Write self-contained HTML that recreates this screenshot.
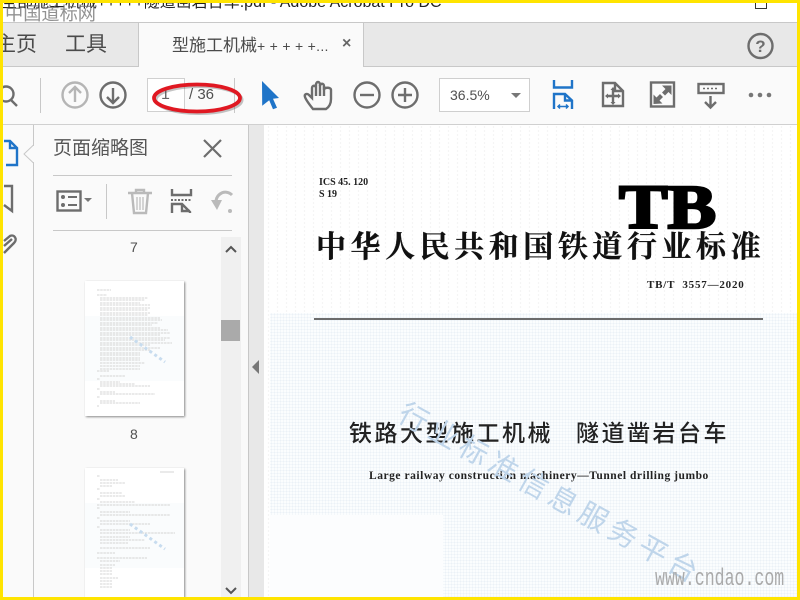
<!DOCTYPE html>
<html lang="zh"><head><meta charset="utf-8"><style>
*{box-sizing:border-box}
html,body{margin:0;padding:0;background:#fff}
body{width:800px;height:600px;position:relative;overflow:hidden;font-family:"Liberation Sans","Noto Sans CJK SC",sans-serif;color:#505050}
.a{position:absolute;white-space:nowrap}
svg{position:absolute;overflow:visible}
.s{fill:none;stroke:#6d6d6d;stroke-width:2.4}
</style></head><body>
<div class="a" style="left:3px;top:3px;width:794px;height:20px;background:#fff;border-bottom:1px solid #c8c8c8;overflow:hidden"><div class="a" style="left:-2px;top:-10px;font-size:16px;color:#222;line-height:20px">全部施工机械+++++隧道凿岩台车.pdf - Adobe Acrobat Pro DC</div><div class="a" style="left:752px;top:-6px;width:12px;height:12px;border:1px solid #333"></div></div>
<div class="a" style="left:3px;top:23px;width:794px;height:44px;background:#e8e8e8;border-bottom:1px solid #c8c8c8"></div>
<div class="a" style="left:138px;top:23px;width:226px;height:44px;background:#fafafa;border-left:1px solid #c8c8c8;border-right:1px solid #c8c8c8"></div>
<div class="a" style="left:3px;top:23px;width:135px;height:43px;overflow:hidden"><div class="a" style="left:-8px;top:8px;font-size:21px;line-height:28px;color:#4a4a4a">主页</div></div>
<div class="a" style="left:65px;top:31px;font-size:21px;line-height:28px;color:#4a4a4a">工具</div>
<div class="a" style="left:172px;top:34px;font-size:17px;line-height:23px;color:#4a4a4a">型施工机械<span style="font-size:14px;letter-spacing:.3px">+ + + + +...</span></div>
<div class="a" style="left:342px;top:33px;font-size:16px;line-height:22px;font-weight:bold;color:#666">×</div>
<svg style="left:0;top:0" width="800" height="125">
<circle class="s" cx="760.500" cy="46" r="12" stroke-width="2.500"/>
<text x="760.500" y="52" text-anchor="middle" font-size="17" font-weight="bold" fill="#6d6d6d" font-family="Liberation Sans">?</text>
</svg>
<div class="a" style="left:3px;top:67px;width:794px;height:58px;background:#fafafa;border-bottom:1px solid #d0d0d0"></div>
<svg style="left:0;top:0" width="800" height="125">
<circle class="s" cx="6" cy="94" r="7.500" stroke-width="2.600"/><path class="s" stroke-width="3" d="M11 100l6 6"/>
<path d="M40.500 78v35M234.500 78v35" stroke="#c8c8c8" stroke-width="1"/>
<circle class="s" style="stroke:#b5b5b5" cx="75" cy="95" r="12.500"/><path class="s" style="stroke:#b5b5b5" d="M75 102V88M69 93l6-6 6 6"/>
<circle class="s" cx="113" cy="95" r="12.500"/><path class="s" d="M113 88v14M107 97l6 6 6-6"/>
<rect x="147.500" y="78.500" width="37" height="33" fill="#fff" stroke="#d0d0d0"/>
<path fill="#1f74c8" d="M262 81l17 17-6 .8 4 9-4 1.500-3.800-9-7 5.500z"/>
<path class="s" stroke-width="2.200" d="M313 109C309 104 306 100 305 97C304 94 307 93 309 95L312 98V88C312 85 316 85 316 88V85C316 81 320 81 320 85V86C320 83 324 83 324 86V90C324 87 331 87 331 90V99C331 104 329 107 326 109Z"/>
<path class="s" stroke-width="1.800" d="M316 88v8M320 85v11M324 86v10"/>
<circle class="s" cx="367" cy="95" r="12.500"/><path class="s" d="M360 95h14"/>
<circle class="s" cx="405" cy="95" r="12.500"/><path class="s" d="M398 95h14M405 88v14"/>
<rect x="439.500" y="78.500" width="90" height="33" fill="#fff" stroke="#cfcfcf"/>
<path fill="#777" d="M511 93h10l-5 5z"/>
<path fill="none" stroke="#1f74c8" stroke-width="2.400" d="M554 80v7.500h18V80M554 109V94h11l7 6.500V109M565 94v6.500h7"/>
<path fill="none" stroke="#1f74c8" stroke-width="1.500" d="M558 106.500h10M560 104.500l-2 2 2 2M566 104.500l2 2-2 2"/>
<path class="s" stroke-width="2.800" d="M603 83h12l8 8v15H603zM615 83v8h8"/>
<path class="s" stroke-width="1.500" d="M613 90v12M607 96h12"/>
<path fill="#6d6d6d" d="M613 87l2.500 3h-5zM613 105l2.500-3h-5zM605 96l3-2.500v5zM621 96l-3-2.500v5z"/>
<rect class="s" x="651" y="82.500" width="23" height="24" stroke-width="2.800"/>
<path fill="#6d6d6d" d="M662 85.500h9.500v9.500l-3-3-3.500 3.500-3-3 3.500-3.500zM653.500 104v-9.500l3 3 3.500-3.500 3 3-3.500 3.500 3 3z"/>
<rect class="s" x="698.500" y="84" width="25" height="9" stroke-width="2.800"/>
<path stroke="#6d6d6d" stroke-width="1.500" stroke-dasharray="2 2" d="M703 88.500h15"/>
<path class="s" d="M710.500 96v11M705 102l5.500 5.500 5.500-5.500"/>
<circle cx="751" cy="95" r="2.300" fill="#777"/><circle cx="760" cy="95" r="2.300" fill="#777"/><circle cx="769" cy="95" r="2.300" fill="#777"/>
</svg>
<div class="a" style="left:161px;top:85px;font-size:16px;line-height:20px;color:#666">1</div>
<div class="a" style="left:189px;top:85px;font-size:15px;line-height:20px;color:#505050">/ 36</div>
<div class="a" style="left:450px;top:85px;font-size:14px;line-height:21px;color:#505050">36.5%</div>
<svg style="left:0;top:0" width="260" height="125">
<ellipse cx="199" cy="100" rx="43" ry="13.500" fill="none" stroke="#555" stroke-width="3" opacity=".35"/>
<ellipse cx="197" cy="98" rx="43" ry="13.500" fill="none" stroke="#e01822" stroke-width="3.800"/>
</svg>
<div class="a" style="left:3px;top:125px;width:31px;height:475px;background:#fafafa;border-right:1px solid #c8c8c8"></div>
<div class="a" style="left:34px;top:125px;width:215px;height:475px;background:#fafafa;border-right:1px solid #c8c8c8"></div>
<svg style="left:0;top:125px" width="260" height="475">
<path fill="#fafafa" stroke="#c8c8c8" d="M33.500 20l-9.500 9 9.500 9"/><path fill="#fafafa" d="M33 21h2v16h-2z"/>
<path fill="none" stroke="#1f74c8" stroke-width="2.400" d="M4 16h6l7 7v17H6M10 16v7h7"/>
<path fill="none" stroke="#6d6d6d" stroke-width="2.400" d="M4 61h8v25l-8-6"/>
<path fill="none" stroke="#6d6d6d" stroke-width="2.400" d="M4 128l10-10c4-4 0-9-4-7l-6 5M4 121l8-7"/>
<path d="M53 50.500h179M53 105.500h179" stroke="#c8c8c8" stroke-width="1"/>
<path d="M204 15l17 17M221 15l-17 17" stroke="#6d6d6d" stroke-width="2.200"/>
<rect x="57.500" y="66.500" width="23" height="19" fill="none" stroke="#6d6d6d" stroke-width="2.400"/>
<circle cx="63" cy="72" r="2" fill="#6d6d6d"/><circle cx="63" cy="80" r="2" fill="#6d6d6d"/><path d="M68 72h9M68 80h9" stroke="#6d6d6d" stroke-width="2"/>
<path fill="#777" d="M84 73h8l-4 4z"/>
<path d="M106.500 59v35" stroke="#c8c8c8"/>
<path fill="none" stroke="#bababa" stroke-width="2.400" d="M128 68h24M132 68l2 20h12l2-20M136 68v-3h8v3"/><path stroke="#bababa" stroke-width="1.200" d="M137 72v13M140 72v13M143 72v13"/>
<path fill="none" stroke="#6d6d6d" stroke-width="2.400" d="M172 64v6h19v-6M172 88V79h10l8 8v1M182 79v7h8"/>
<path stroke="#6d6d6d" stroke-width="2" stroke-dasharray="2 1.500" d="M171 75h21"/>
<path fill="none" stroke="#bababa" stroke-width="3" d="M232 70c-3-3-8-4-12-1-4 3-5 8-3 12"/><path fill="#bababa" d="M211 75h11l-5 10z"/><circle cx="230" cy="86" r="2" fill="#bababa"/>
<rect x="221" y="112" width="20" height="363" fill="#f0f0f0"/>
<rect x="221" y="195" width="19" height="21" fill="#aaa"/>
<path fill="none" stroke="#555" stroke-width="2" d="M226 127l5-5 5 5M226 463l5 5 5-5"/>
</svg>
<div class="a" style="left:53px;top:136px;font-size:19px;line-height:26px;color:#555">页面缩略图</div>
<div class="a" style="left:130px;top:238px;font-size:14px;line-height:18px;color:#505050">7</div>
<div class="a" style="left:130px;top:425px;font-size:14px;line-height:18px;color:#505050">8</div>
<svg style="left:85px;top:281px" width="100" height="316">
<rect width="99" height="135" fill="#fff" style="filter:drop-shadow(1px 1px 1px #888)"/><rect y="187" width="99" height="130" fill="#fff" style="filter:drop-shadow(1px 1px 1px #888)"/>
<rect y="35" width="99" height="65" fill="#fafcfd"/><rect y="222" width="99" height="65" fill="#fafcfd"/>
<path stroke="#d4d4d4" stroke-width="1" stroke-dasharray="2.500 .7" fill="none" d="M12 9h14M12 14h10M15 17h48M15 19h45M15 22h40M15 24h50M15 27h50M15 29h48M15 32h50M15 34h48M15 37h60M15 39h62M15 42h58M15 44h52M15 47h60M15 49h68M15 52h70M15 54h60M15 57h70M15 59h65M15 62h72M15 64h50M15 67h60M15 69h50M15 72h40M15 74h40M15 77h40M15 79h40M15 82h45M15 85h40M15 88h40M12 90h12M15 95h25M12 98h3M15 101h20M15 103h35M15 105h50M12 108h3M15 111h15M15 113h55M12 116h3M15 120h15M15 122h40M12 125h2M12 195h3M15 199h18M15 202h25M15 205h12M12 208h3M15 212h22M15 215h25M12 218h3M15 221h35M12 224h73M12 227h3M15 231h30M15 234h70M12 237h3M15 240h30M15 243h50M12 246h3M15 249h30M15 252h75M15 256h30M15 259h45M15 262h28M15 267h50M12 272h18M12 277h50M15 280h20M15 284h15M15 287h12M15 290h12M15 293h12M15 297h18M15 300h12M15 303h12M15 306h12"/>
<path stroke="#d4d4d4" stroke-width="1" d="M75 191h14"/>
<path stroke="#c7dcef" stroke-width="3" stroke-dasharray="3 3" d="M45 56l35 25M45 243l35 25"/>
</svg>
<div class="a" style="left:249px;top:125px;width:15px;height:475px;background:#e8e8e8"></div>
<svg style="left:249px;top:355px" width="14" height="24"><path fill="#777" d="M3 12l7-7v14z"/></svg>
<div class="a" style="left:264px;top:125px;width:533px;height:472px;background-color:#fff;background-image:radial-gradient(circle,#f0f0f0 .6px,transparent .9px);background-size:9px 4px"></div>
<div class="a" style="left:270px;top:313px;width:527px;height:284px;background-color:#fbfdfe;background-image:radial-gradient(circle,#ebf1f7 .8px,transparent 1px);background-size:3px 3px"></div>
<div class="a" style="left:270px;top:515px;width:173px;height:82px;background:#fcfdfe"></div>
<div class="a" style="left:314px;top:318px;width:449px;height:2px;background:#6c6c6c"></div>
<div class="a" style="left:319px;top:177px;font:bold 10px/12px 'Liberation Serif',serif;color:#222">ICS 45. 120</div>
<div class="a" style="left:319px;top:189px;font:bold 10px/12px 'Liberation Serif',serif;color:#222">S 19</div>
<div class="a" style="left:619px;top:173px;font:bold 62px/70px 'Liberation Serif',serif;color:#000;transform-origin:0 0;transform:scale(1.175,1);-webkit-text-stroke:2.500px #000">TB</div>
<div class="a" style="left:316px;top:227px;font:bold 30px/34px 'Noto Serif CJK SC',serif;color:#111;letter-spacing:4.550px;-webkit-text-stroke:.3px #111">中华人民共和国铁道行业标准</div>
<div class="a" style="left:647px;top:278px;font:bold 11px/14px 'Liberation Serif',serif;color:#222;letter-spacing:.8px">TB/T&nbsp; 3557—2020</div>
<div class="a" style="left:349px;top:417px;font:500 23px/28px 'Noto Sans CJK SC',sans-serif;color:#222;letter-spacing:2.500px">铁路大型施工机械&nbsp;&nbsp; 隧道凿岩台车</div>
<div class="a" style="left:369px;top:469px;font:bold 11.500px/14px 'Liberation Serif',serif;color:#222;letter-spacing:.54px">Large railway construction machinery—Tunnel drilling jumbo</div>
<div class="a" style="left:402px;top:389px;font:29px/40px 'Noto Sans CJK SC',sans-serif;color:#bfd5ea;transform-origin:0 50%;transform:rotate(29deg);letter-spacing:5.200px">行业标准信息服务平台</div>
<div class="a" style="left:655px;top:566px;font:24px/28px 'Liberation Mono',monospace;color:#aaa;transform-origin:0 0;transform:scale(.69,1)">www.cndao.com</div>
<div class="a" style="left:5px;top:-1px;font:400 18.200px/28px 'Noto Sans CJK SC',sans-serif;color:rgba(110,110,110,.75)">中国道标网</div>
<div class="a" style="left:0;top:0;width:800px;height:3px;background:#ffe400"></div>
<div class="a" style="left:0;top:597px;width:800px;height:3px;background:#ffe400"></div>
<div class="a" style="left:0;top:0;width:3px;height:600px;background:#ffe400"></div>
<div class="a" style="left:797px;top:0;width:3px;height:600px;background:#ffe400"></div>
</body></html>
